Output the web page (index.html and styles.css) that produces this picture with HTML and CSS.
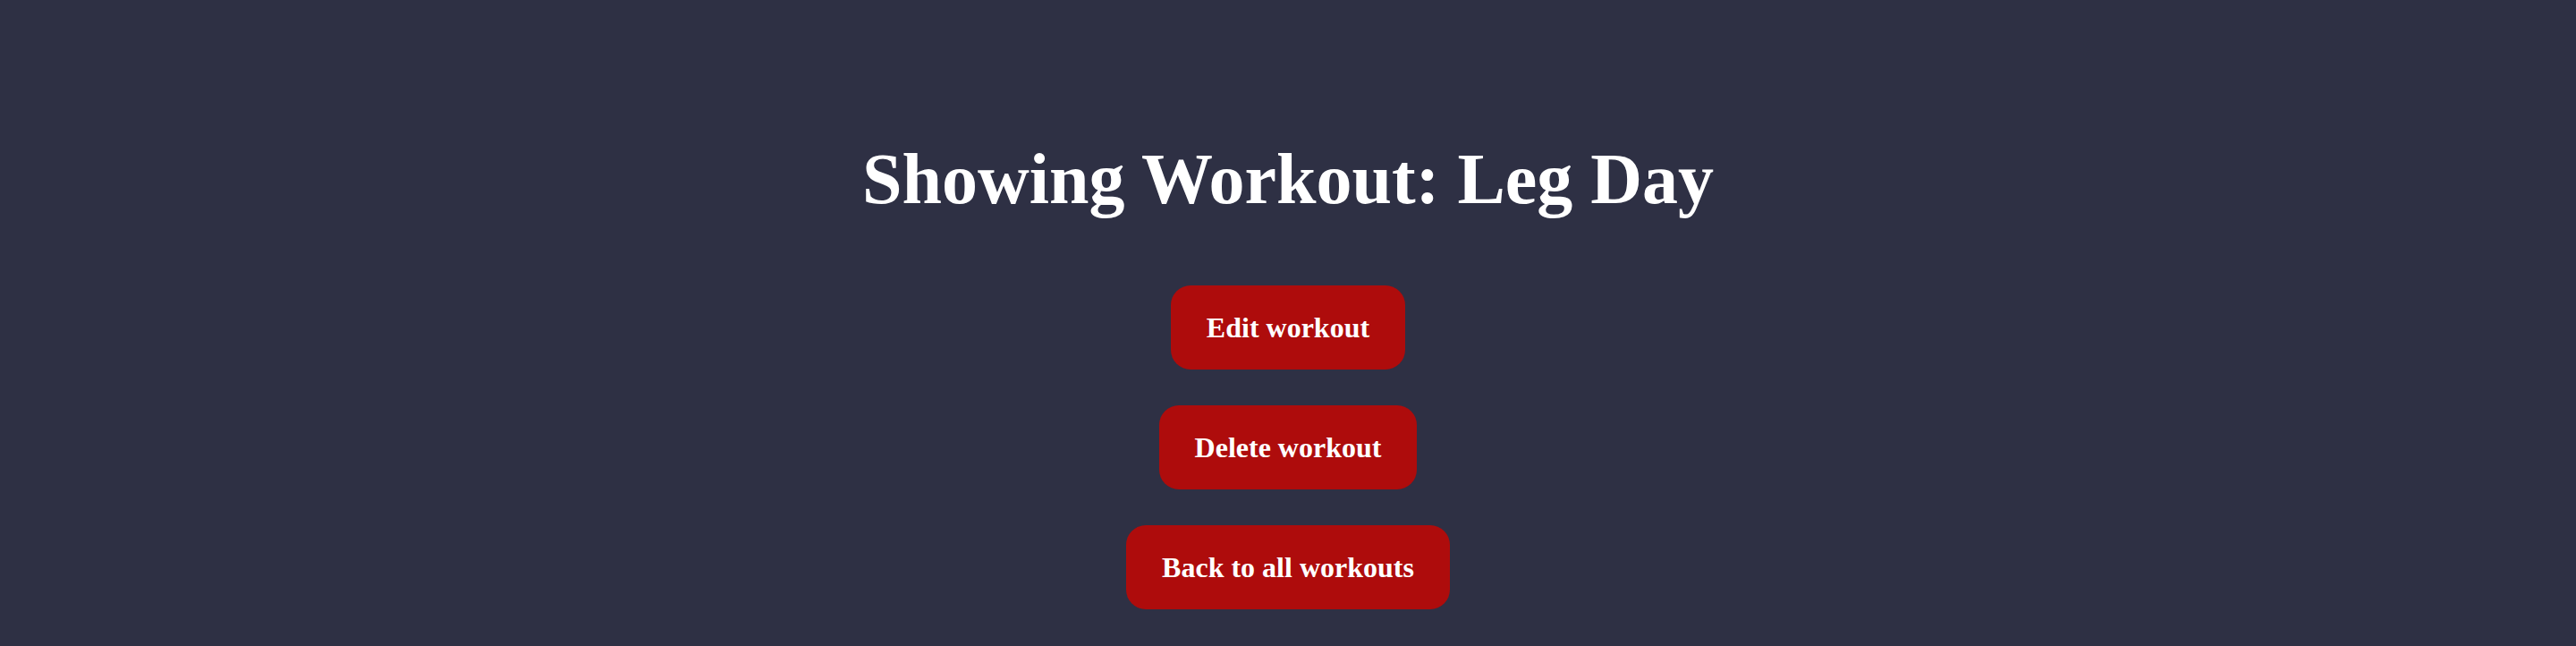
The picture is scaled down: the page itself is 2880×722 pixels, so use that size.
FILE: index.html
```html
<!DOCTYPE html>
<html lang="en">
<head>
<meta charset="utf-8">
<title>Showing Workout: Leg Day</title>
<link rel="stylesheet" href="styles.css">
</head>
<body>
<main class="page">
  <h1 class="title">Showing Workout: Leg Day</h1>
  <div class="actions">
    <a class="btn" href="#">Edit workout</a>
    <a class="btn" href="#">Delete workout</a>
    <a class="btn" href="#">Back to all workouts</a>
  </div>
</main>
</body>
</html>
```

FILE: styles.css
```css
html, body {
  margin: 0;
  padding: 0;
  background: #2e3044;
  height: 100%;
}

body {
  font-family: "Liberation Serif", "Times New Roman", serif;
  color: #ffffff;
}

.page {
  display: flex;
  flex-direction: column;
  align-items: center;
  padding-top: 154px;
}

.title {
  margin: 0;
  font-size: 80px;
  font-weight: bold;
  line-height: 92px;
}

.actions {
  display: flex;
  flex-direction: column;
  align-items: center;
  gap: 40px;
  margin-top: 73px;
}

.btn {
  display: block;
  background: #ae0c0c;
  color: #ffffff;
  text-decoration: none;
  font-size: 32px;
  font-weight: bold;
  line-height: 38px;
  padding: 28px 40px;
  border-radius: 22px;
}
```
